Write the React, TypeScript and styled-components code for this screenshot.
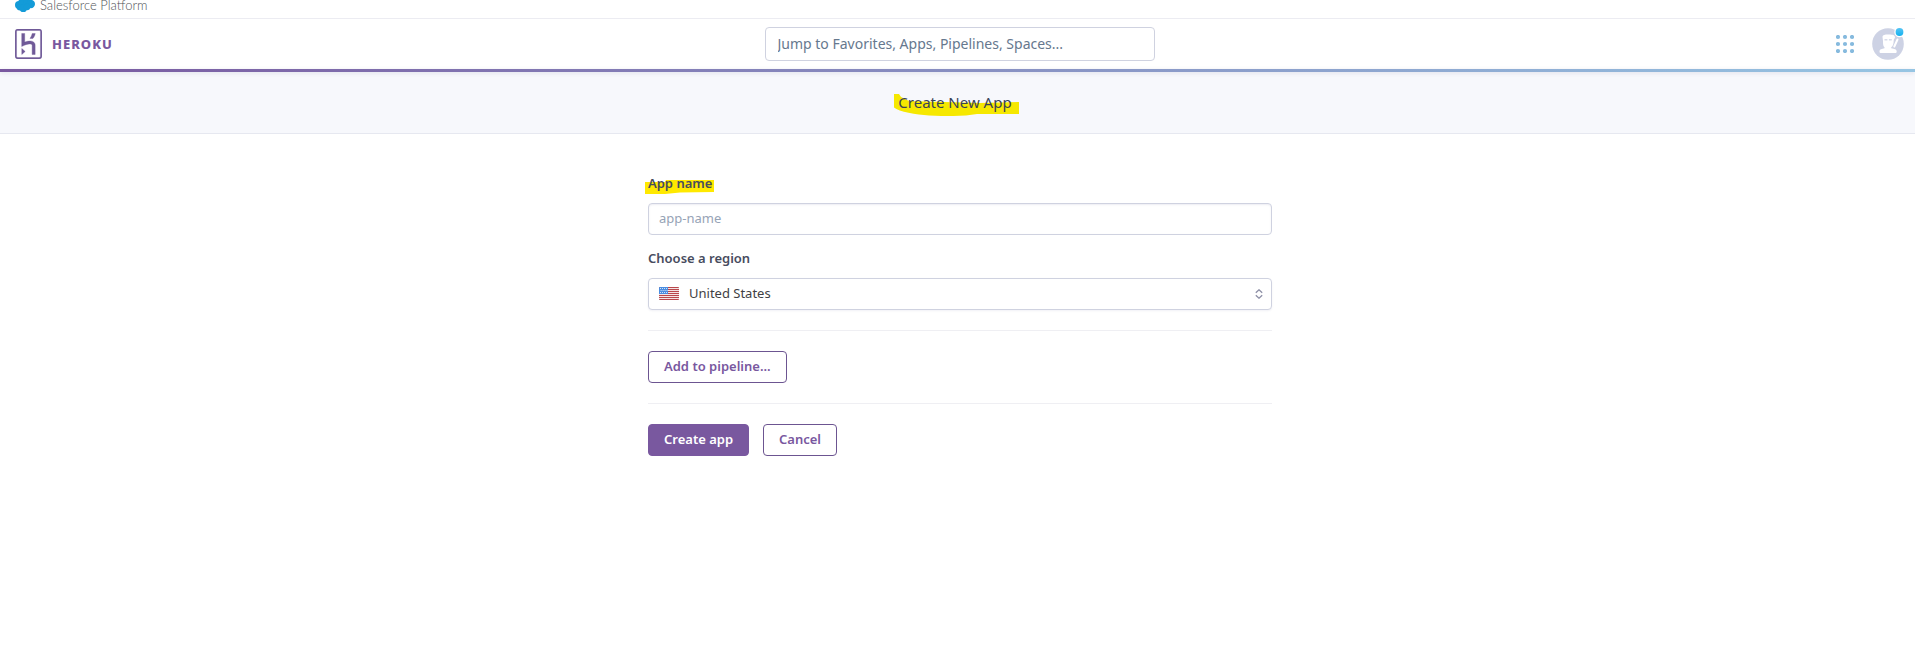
import React from 'react';
import styled, { createGlobalStyle, css } from 'styled-components';

const font = '"Noto Sans", "Open Sans", sans-serif';
const purple = '#79589f';

const GlobalStyle = createGlobalStyle`
  *, *::before, *::after { box-sizing: border-box; }
  body {
    margin: 0;
    background: #fff;
    color: #3f4350;
    font: 13px/18px ${font};
  }
`;

const PlatformBar = styled.div`
  display: flex;
  align-items: flex-start;
  gap: 5px;
  height: 19px;
  padding: 0 15px;
  border-bottom: 1px solid #ececf2;
`;

const PlatformLink = styled.a`
  color: #505357;
  font: 300 13px/10px Lato, ${font};
  text-decoration: none;
`;

const Header = styled.header`
  display: grid;
  grid-template-columns: 1fr 390px 1fr;
  align-items: center;
  height: 50px;
  padding: 0 11px 0 15px;
`;

const GradientRule = styled.div`
  position: relative;
  height: 3px;
  background: linear-gradient(to right, #79589f, #96c5e3);
  box-shadow: 0 1px 4px rgba(80, 80, 120, 0.15);
`;

const Brand = styled.a`
  display: flex;
  align-items: center;
  gap: 10px;
  justify-self: start;
  color: ${purple};
  text-decoration: none;
`;

const Wordmark = styled.span`
  font: 800 13px/20px ${font};
  letter-spacing: 1px;
`;

const field = css`
  width: 100%;
  border: 1px solid #cfd2e0;
  border-radius: 4px;
  background: #fff;
  outline: none;
`;

const SearchInput = styled.input`
  ${field}
  height: 34px;
  padding: 0 12px 2px;
  font: 14px/20px ${font};
  &::placeholder { color: #66788e; opacity: 1; }
`;

const Actions = styled.div`
  display: flex;
  align-items: center;
  gap: 18px;
  justify-self: end;
`;

const IconButton = styled.button`
  display: flex;
  padding: 0;
  border: 0;
  background: none;
  cursor: pointer;
`;

const TitleBar = styled.div`
  display: flex;
  align-items: center;
  justify-content: center;
  height: 62px;
  padding: 0 5px 2px 0;
  border-bottom: 1px solid #e6e8f0;
  background: #f7f8fc;
`;

const Title = styled.h1`
  position: relative;
  z-index: 0;
  margin: 0;
  color: #3a4256;
  font: 400 15px/22px ${font};
`;

const Marker = styled.svg`
  position: absolute;
  z-index: -1;
`;

const TitleMarker = styled(Marker)`
  top: 3px;
  left: -4px;
`;

const LabelMarker = styled(Marker)`
  top: 6px;
  left: -3px;
`;

const Main = styled.main`
  padding: 40px 0 40px 5px;
`;

const Form = styled.form`
  width: 624px;
  max-width: 100%;
  margin: 0 auto;
`;

const Field = styled.div`
  & + & { margin-top: 14px; }
`;

const Label = styled.label`
  display: block;
  position: relative;
  z-index: 0;
  margin-bottom: 11px;
  color: #474c5e;
  font-weight: 600;
`;

const TextInput = styled.input`
  ${field}
  display: block;
  height: 32px;
  padding: 0 10px 2px;
  font: 13px/18px ${font};
  box-shadow: inset 0 1px 2px rgba(80, 80, 140, 0.1);
  &::placeholder { color: #96a3b6; opacity: 1; }
`;

const SelectWrap = styled.div`
  position: relative;
`;

const Select = styled.select`
  ${field}
  display: block;
  height: 32px;
  padding: 0 32px 2px 40px;
  appearance: none;
  color: #3f3f44;
  font: 13px/18px ${font};
  box-shadow: 0 1px 2px rgba(80, 80, 140, 0.08);
`;

const Flag = styled.svg`
  position: absolute;
  top: 9px;
  left: 11px;
  pointer-events: none;
`;

const Chevrons = styled.svg`
  position: absolute;
  top: 11px;
  right: 9px;
  pointer-events: none;
`;

const Divider = styled.hr`
  height: 1px;
  margin: 20px 0;
  border: 0;
  background: #efeff3;
`;

const ButtonRow = styled.div`
  display: flex;
  gap: 14px;
`;

const Button = styled.button<{ $primary?: boolean }>`
  height: 32px;
  padding: 0 15px 2px;
  border: 1px solid ${p => (p.$primary ? purple : '#6c5591')};
  border-radius: 4px;
  background: ${p => (p.$primary ? purple : '#fff')};
  color: ${p => (p.$primary ? '#fff' : purple)};
  font: 600 13px/18px ${font};
  cursor: pointer;
`;

const CloudIcon = () => (
  <svg width="20" height="12" viewBox="0 2 20 12" aria-hidden="true">
    <g fill="#139bd8">
      <circle cx="4" cy="7" r="4" />
      <circle cx="7.5" cy="4" r="4" />
      <circle cx="12" cy="4" r="4" />
      <circle cx="15.8" cy="6" r="4.2" />
      <circle cx="5" cy="9.2" r="3.3" />
      <circle cx="8.3" cy="10.4" r="3.6" />
      <circle cx="12" cy="9" r="3.2" />
    </g>
  </svg>
);

const HerokuIcon = () => (
  <svg width="27" height="30" viewBox="1.2 0 21.6 24" fill="#705a98" aria-hidden="true">
    <path d="M20.61 0H3.39C2.189 0 1.23.96 1.23 2.16v19.681c0 1.198.959 2.159 2.16 2.159h17.22c1.2 0 2.159-.961 2.159-2.159V2.16C22.77.96 21.811 0 20.61 0zm.96 21.841c0 .539-.421.96-.96.96H3.39c-.54 0-.96-.421-.96-.96V2.16c0-.54.42-.961.96-.961h17.22c.539 0 .96.421.96.961v19.681zM6.63 20.399L9.33 18l-2.7-2.4v4.799zm9.72-9.719c-.479-.48-1.379-1.08-2.879-1.08-1.621 0-3.301.421-4.5.84V3.6h-2.4v10.38l1.68-.78s2.76-1.26 5.16-1.26c1.2 0 1.5.66 1.5 1.26v7.2h2.4v-7.2c.059-.179.059-1.501-.961-2.52zM13.17 7.5h2.4c1.08-1.26 1.62-2.521 1.8-3.9h-2.399c-.241 1.379-.841 2.64-1.801 3.9z" stroke="#705a98" strokeWidth=".3" />
  </svg>
);

const GridIcon = () => (
  <svg width="18" height="18" viewBox="0 0 18 18" fill="#86bade" aria-hidden="true">
    {[2, 9, 16].map(y => [2, 9, 16].map(x => <circle key={`${x}-${y}`} cx={x} cy={y} r="2.1" />))}
  </svg>
);

const AvatarIcon = () => (
  <svg width="32" height="32" viewBox="0 0 32 32" overflow="visible" aria-hidden="true">
    <defs>
      <linearGradient id="badge" x1="0" y1="0" x2="0" y2="1">
        <stop offset="0" stopColor="#55c4f5" />
        <stop offset="1" stopColor="#14b1ee" />
      </linearGradient>
    </defs>
    <circle cx="16" cy="16" r="15.8" fill="#cdd2e4" />
    <path d="M10.500 9c0-2 2.500-2.500 5.500-2.500s6.500 0 7 2.500c0 1.500-1.300 2-1.300 3.500 0 3.500-.8 5.500-2.500 6.800v1c3 .5 5.500 1 5.500 3.200 0 1-.6 1.500-1.500 1.500H9c-1 0-1.500-.5-1.500-1.500 0-2.200 2.500-2.700 5-3.200v-1C11 18 11 16 11 13z" fill="#fff" />
    <path d="M25.500 11.500l-3.200 7" stroke="#fff" strokeWidth="2" strokeLinecap="round" />
    <path d="M12.500 11h2.900v1.500h-2.900zM16.900 11h2.900v1.500h-2.900z" fill="#d8dcea" />
    <circle cx="27.500" cy="4" r="5.200" fill="#fff" />
    <circle cx="27.500" cy="4" r="3.900" fill="url(#badge)" />
  </svg>
);

const FlagIcon = () => (
  <Flag width="20" height="13" viewBox="0 0 20 13" aria-hidden="true">
    <clipPath id="flag"><rect width="20" height="13" rx="1" /></clipPath>
    <g clipPath="url(#flag)">
      <rect width="20" height="13" fill="#f4e4e4" />
      {[0, 2, 4, 6, 8, 10, 12].map(y => <rect key={y} y={y} width="20" height="1" fill="#b9484c" />)}
      <rect width="9" height="7" fill="#4a8de0" />
      {[1, 3, 5].map(y => [1, 3, 5, 7].map(x => <rect key={`${x}-${y}`} x={x + (y === 3 ? 0.6 : 0)} y={y} width="1" height="1" fill="#cfe2fa" />))}
    </g>
  </Flag>
);

export default function App() {
  return (
    <>
      <GlobalStyle />
      <PlatformBar>
        <CloudIcon />
        <PlatformLink href="#">Salesforce Platform</PlatformLink>
      </PlatformBar>
      <Header>
        <Brand href="#">
          <HerokuIcon />
          <Wordmark>HEROKU</Wordmark>
        </Brand>
        <SearchInput type="text" aria-label="Search" placeholder="Jump to Favorites, Apps, Pipelines, Spaces..." />
        <Actions>
          <IconButton type="button" aria-label="Products"><GridIcon /></IconButton>
          <IconButton type="button" aria-label="Account"><AvatarIcon /></IconButton>
        </Actions>
      </Header>
      <GradientRule />
      <TitleBar>
        <Title>
          <TitleMarker width="126" height="22" viewBox="0 0 126 22" fill="#f6e800" aria-hidden="true">
            <path d="M0 0h5l2 3 8 4 71 2 39-1v12H83l-11 1.500c-14 .8-25 .7-37 0C22 20.500 5 18 0 13.500z" />
          </TitleMarker>
          Create New App
        </Title>
      </TitleBar>
      <Main>
        <Form onSubmit={e => e.preventDefault()}>
          <Field>
            <Label htmlFor="app-name">
              <LabelMarker width="69" height="14" viewBox="0 0 69 14" fill="#ffe900" aria-hidden="true">
                <path d="M0 2h20l1-2h48v12l-34 .5L20 14H0z" />
              </LabelMarker>
              App name
            </Label>
            <TextInput id="app-name" type="text" placeholder="app-name" />
          </Field>
          <Field>
            <Label htmlFor="region">Choose a region</Label>
            <SelectWrap>
              <Select id="region" defaultValue="us">
                <option value="us">United States</option>
              </Select>
              <FlagIcon />
              <Chevrons width="8" height="10" viewBox="0 0 8 10" fill="none" stroke="#8d8fa6" strokeWidth="1.300" aria-hidden="true">
                <path d="M.8 3.800L4 .8l3.200 3M.8 6.200L4 9.200l3.200-3" />
              </Chevrons>
            </SelectWrap>
          </Field>
          <Divider />
          <ButtonRow>
            <Button type="button">Add to pipeline...</Button>
          </ButtonRow>
          <Divider />
          <ButtonRow>
            <Button type="submit" $primary>Create app</Button>
            <Button type="button">Cancel</Button>
          </ButtonRow>
        </Form>
      </Main>
    </>
  );
}
